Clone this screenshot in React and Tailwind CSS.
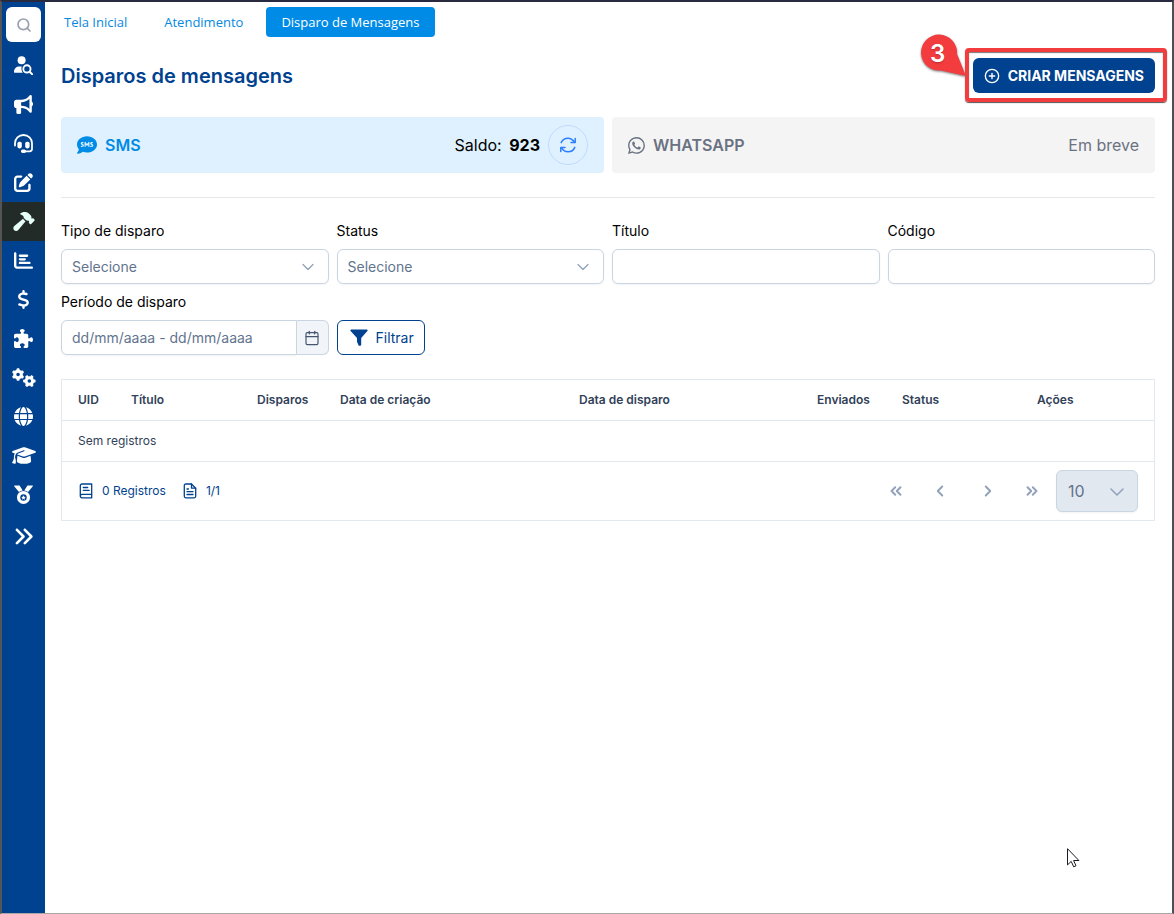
import { useState } from "react";
import { BsWhatsapp } from "react-icons/bs";
import {
  FaAnglesRight,
  FaBullhorn,
  FaChartBar,
  FaCommentSms,
  FaDollarSign,
  FaGears,
  FaGlobe,
  FaGraduationCap,
  FaHammer,
  FaPenToSquare,
  FaPuzzlePiece,
} from "react-icons/fa6";
import {
  Calendar,
  ChevronDown,
  ChevronLeft,
  ChevronRight,
  ChevronsLeft,
  ChevronsRight,
  CirclePlus,
  Search,
} from "lucide-react";

function UserSearchIcon({ className }) {
  return (
    <svg viewBox="0 0 20 20" className={className} fill="none">
      <circle cx="8" cy="4.4" r="4.2" fill="currentColor" />
      <path d="M0 17c0-4 2.400-6 5.800-6h2.400c-.8 2.200-.4 4.400 1 6.500H.5z" fill="currentColor" />
      <circle cx="13.600" cy="13.600" r="3.800" stroke="currentColor" strokeWidth="2" />
      <path d="M16.500 16.600l2.600 2.600" stroke="currentColor" strokeWidth="2" strokeLinecap="round" />
    </svg>
  );
}

function HeadsetIcon({ className }) {
  return (
    <svg viewBox="0 0 19 19" className={className} fill="none">
      <path
        d="M1 11.500V9.200a8.500 8.200 0 0 1 17 0v5.600c0 1.500-1 2.500-2.500 2.500H10"
        stroke="currentColor"
        strokeWidth="1.800"
        strokeLinecap="round"
      />
      <rect x="3.400" y="7.800" width="4.400" height="6.600" rx="1.800" fill="currentColor" />
      <rect x="11.200" y="7.800" width="4.400" height="6.600" rx="1.800" fill="currentColor" />
      <rect x="7" y="15.500" width="5" height="3.400" rx="1.600" fill="currentColor" />
    </svg>
  );
}

function MedalIcon({ className }) {
  return (
    <svg viewBox="0 0 20 20" className={className} fill="currentColor">
      <path d="M.5.500h5.300l3.400 5.200c-1.500.2-2.900.8-4 1.700L.2 1.300C0 .9.100.500.500.500z" />
      <path d="M19.500.500h-5.300l-3.400 5.200c1.500.2 2.900.8 4 1.700l5-6.100c.2-.4.100-.8-.3-.8z" />
      <path
        fillRule="evenodd"
        d="M10 6.200a6.900 6.900 0 1 0 0 13.800 6.900 6.900 0 0 0 0-13.800zm0 3.600a3.400 3.400 0 1 1 0 6.800 3.400 3.400 0 0 1 0-6.800z"
      />
      <path d="M10 10.800l.7 1.500 1.700.2-1.200 1.200.3 1.700-1.500-.8-1.500.8.3-1.700-1.200-1.200 1.700-.2z" />
    </svg>
  );
}

function SyncIcon({ className }) {
  return (
    <svg
      viewBox="0 0 16 16"
      className={className}
      fill="none"
      stroke="currentColor"
      strokeWidth="1.500"
      strokeLinecap="round"
      strokeLinejoin="round"
    >
      <path d="M1.200 5.600C2.400 2.800 4.900 1.200 8 1.200c2.900 0 5 1.600 6.600 4.200" />
      <path d="M15.200 1.400v4.200H11" />
      <path d="M14.800 10.400c-1.200 2.800-3.700 4.400-6.800 4.400-2.900 0-5-1.600-6.600-4.200" />
      <path d="M.8 14.600v-4.200H5" />
    </svg>
  );
}

function FilterIcon({ className }) {
  return (
    <svg viewBox="0 0 18 17" className={className} fill="currentColor">
      <path d="M1.200.500h15.600c.8 0 1.100.8.6 1.400L11.200 9v6.800c0 .5-.4.9-.9.900H9.200c-.5 0-.9-.4-.9-.9l-1.300-3V9L.6 1.900C.100 1.300.400.500 1.200.500z" />
    </svg>
  );
}

function RecordsIcon({ className }) {
  return (
    <svg viewBox="0 0 14 16" className={className} fill="none" stroke="currentColor" strokeWidth="1.300" strokeLinecap="round">
      <path d="M3 1h9.700v13.800H3c-1 0-1.700-.7-1.700-1.700V2.700C1.300 1.700 2 1 3 1z" strokeLinejoin="round" />
      <path d="M1.500 12c.4-.5.900-.7 1.500-.7h9.500M4.300 4.500h4.400M4.300 7.300h5.900" />
    </svg>
  );
}

function PageIcon({ className }) {
  return (
    <svg viewBox="0 0 14 16" className={className} fill="none" stroke="currentColor" strokeWidth="1.300" strokeLinecap="round" strokeLinejoin="round">
      <path d="M8.500 1H2.800C1.900 1 1.300 1.600 1.300 2.500v10.800c0 .9.600 1.500 1.500 1.500h8.400c.9 0 1.500-.6 1.500-1.500V5.200z" />
      <path d="M8.500 1v4.200h4.200M4 6h1.500M4 8.700h6M4 11.500h6" />
    </svg>
  );
}

const menu = [
  { label: "Clientes", icon: UserSearchIcon },
  { label: "Marketing", icon: FaBullhorn },
  { label: "Atendimento", icon: HeadsetIcon },
  { label: "Cadastros", icon: FaPenToSquare },
  { label: "Ferramentas", icon: FaHammer, active: true, wide: true },
  { label: "Relatórios", icon: FaChartBar },
  { label: "Financeiro", icon: FaDollarSign },
  { label: "Integrações", icon: FaPuzzlePiece },
  { label: "Configurações", icon: FaGears, wide: true },
  { label: "Site", icon: FaGlobe },
  { label: "Treinamentos", icon: FaGraduationCap, wide: true },
  { label: "Conquistas", icon: MedalIcon },
];

const columns = [
  { label: "UID", width: "w-[53px]" },
  { label: "Título", width: "w-[126px]" },
  { label: "Disparos", width: "w-[83px]" },
  { label: "Data de criação", width: "w-[239px]" },
  { label: "Data de disparo", width: "w-[238px]" },
  { label: "Enviados", width: "w-[85px]" },
  { label: "Status", width: "w-[135px]" },
  { label: "Ações", width: "w-[133px]" },
];

const fieldStyle =
  "h-[35px] w-full rounded-md border border-slate-300 bg-white px-2.5 text-sm text-slate-500 shadow-xs outline-none placeholder:text-slate-500";

function Field({ id, label, children }) {
  return (
    <div className="flex flex-col gap-2">
      <label htmlFor={id} className="text-sm leading-5 text-black">
        {label}
      </label>
      {children}
    </div>
  );
}

function SelectField({ id, label }) {
  return (
    <Field id={id} label={label}>
      <div className="relative">
        <select id={id} className={`${fieldStyle} appearance-none`}>
          <option>Selecione</option>
        </select>
        <ChevronDown
          strokeWidth={1.5}
          className="pointer-events-none absolute top-2 right-[11px] size-5 text-slate-400"
        />
      </div>
    </Field>
  );
}

function PageButton({ label, icon: Icon }) {
  return (
    <button type="button" aria-label={label} className="flex size-10 items-center justify-center text-slate-400">
      <Icon strokeWidth={2.5} className="size-[18px]" />
    </button>
  );
}

function Sidebar() {
  return (
    <aside className="flex w-[43px] shrink-0 flex-col bg-[#00428f]">
      <button
        type="button"
        aria-label="Buscar"
        className="mx-1 mt-[5px] mb-[3px] flex h-[35px] items-center justify-center rounded-md bg-white text-gray-400"
      >
        <Search strokeWidth={2.5} className="size-4" />
      </button>
      <nav className="flex flex-col pb-px">
        {menu.map(({ label, icon: Icon, active, wide }) => (
          <a
            key={label}
            href="#"
            aria-label={label}
            className={`flex h-[39px] items-center justify-center ${
              active ? "bg-[#222b28] text-[#e6fff8]" : "text-white"
            } first:h-10`}
          >
            <Icon className={wide ? "h-[19px] w-6" : "size-[19px]"} />
          </a>
        ))}
      </nav>
      <button type="button" aria-label="Expandir menu" className="mt-0.5 flex h-[39px] items-center justify-center text-white">
        <FaAnglesRight className="size-[21px]" />
      </button>
    </aside>
  );
}

function Tabs() {
  return (
    <nav className="flex h-[30px] items-stretch font-['Open_Sans',sans-serif] text-[13px] text-[#0688e0]">
      <a href="#" className="flex items-center pt-px pr-[18px] pl-[3px]">
        Tela Inicial
      </a>
      <a href="#" className="flex items-center px-[19px] pt-px">
        Atendimento
      </a>
      <a href="#" className="ml-1 flex items-center rounded-sm bg-[#008be6] px-[15px] pt-px text-white">
        Disparo de Mensagens
      </a>
    </nav>
  );
}

// Marcador do passo 3 do tutorial
function StepMarker() {
  return (
    <div className="pointer-events-none absolute -top-[10px] -right-[12px] -bottom-[9px] -left-[8px] rounded-sm border-4 border-[#f23c3e] shadow-[0_1px_1px_#555,inset_0_1px_1px_#777]">
      <div className="absolute -top-[18px] -left-[49px] h-[46px] w-[48px]">
        <svg viewBox="0 0 48 46" className="size-full drop-shadow-[0_1px_1px_#777]">
          <path d="M46 42L21 36.500A18 18 0 1 1 37 20z" fill="#f23c3e" />
        </svg>
        <span className="absolute top-1.5 left-0 w-9 text-center text-2xl leading-7 font-semibold text-white text-shadow-sm">
          3
        </span>
      </div>
    </div>
  );
}

export default function App() {
  const [title, setTitle] = useState("");
  const [code, setCode] = useState("");
  const [period, setPeriod] = useState("");

  return (
    <div className="relative flex min-h-screen border-2 border-t-[#29293f] border-r-[#4b5057] border-b-[#aaa6a6] border-l-[#555] border-b-1 bg-white font-[Inter,sans-serif]">
      <Sidebar />

      <main className="min-w-0 flex-1 pt-[5px] pr-[17px] pl-4">
        <Tabs />

        {/* Título e botão de criação */}
        <header className="mt-[21px] flex h-[35px] items-center justify-between">
          <h1 className="text-xl font-semibold text-[#00428f]">Disparos de mensagens</h1>
          <div className="relative">
            <button
              type="button"
              className="flex h-[35px] items-center gap-2 rounded-md bg-[#00428f] px-[11px] text-sm font-bold text-white"
            >
              <CirclePlus strokeWidth={2} className="size-4" />
              CRIAR MENSAGENS
            </button>
            <StepMarker />
          </div>
        </header>

        {/* Canais */}
        <section className="mt-6 grid grid-cols-2 gap-2">
          <div className="flex h-14 items-center rounded-sm bg-[#dff1fe] px-4">
            <FaCommentSms className="mr-2 size-5 text-[#008be6]" />
            <strong className="font-semibold text-[#008be6]">SMS</strong>
            <span className="ml-auto text-black">
              Saldo: <strong className="ml-[3px] font-bold">923</strong>
            </span>
            <button
              type="button"
              aria-label="Atualizar saldo"
              className="ml-2 flex size-10 items-center justify-center rounded-full border border-blue-200 text-blue-500"
            >
              <SyncIcon className="size-4" />
            </button>
          </div>
          <div className="flex h-14 items-center rounded-sm bg-[#f4f4f4] px-4 text-gray-500">
            <BsWhatsapp className="mr-2 size-[17px]" />
            <strong className="font-semibold">WHATSAPP</strong>
            <span className="ml-auto">Em breve</span>
          </div>
        </section>

        <hr className="mt-6 border-gray-200" />

        {/* Filtros */}
        <form className="mt-[23px] grid grid-cols-4 gap-2" onSubmit={(e) => e.preventDefault()}>
          <SelectField id="tipo" label="Tipo de disparo" />
          <SelectField id="status" label="Status" />
          <Field id="titulo" label="Título">
            <input id="titulo" value={title} onChange={(e) => setTitle(e.target.value)} className={fieldStyle} />
          </Field>
          <Field id="codigo" label="Código">
            <input id="codigo" value={code} onChange={(e) => setCode(e.target.value)} className={fieldStyle} />
          </Field>
          <Field id="periodo" label="Período de disparo">
            <div className="flex">
              <input
                id="periodo"
                value={period}
                onChange={(e) => setPeriod(e.target.value)}
                placeholder="dd/mm/aaaa - dd/mm/aaaa"
                className={`${fieldStyle} rounded-r-none`}
              />
              <button
                type="button"
                aria-label="Abrir calendário"
                className="flex w-8 shrink-0 items-center justify-center rounded-r-md border border-l-0 border-slate-300 bg-slate-100 text-slate-600"
              >
                <Calendar strokeWidth={1.75} className="size-4" />
              </button>
            </div>
          </Field>
          <button
            type="submit"
            className="flex h-[35px] items-center gap-2 self-end justify-self-start rounded-md border border-[#00428f] px-2.5 pl-3 text-sm text-[#00428f]"
          >
            <FilterIcon className="h-[17px] w-[18px]" />
            Filtrar
          </button>
        </form>

        {/* Tabela */}
        <section className="mt-6 border border-slate-200 text-xs text-slate-700">
          <table className="w-full table-fixed text-left">
            <thead>
              <tr className="h-10 border-b border-slate-200">
                {columns.map((col) => (
                  <th key={col.label} className={`${col.width} pl-4 font-semibold whitespace-nowrap`}>
                    {col.label}
                  </th>
                ))}
              </tr>
            </thead>
            <tbody>
              <tr className="h-[41px] border-b border-slate-200">
                <td colSpan={8} className="px-4">
                  Sem registros
                </td>
              </tr>
            </tbody>
          </table>

          <footer className="flex items-center justify-between px-4 py-2">
            <div className="flex items-center text-[#00428f]">
              <RecordsIcon className="mr-2 h-4 w-4" />
              0 Registros
              <PageIcon className="mr-2 ml-4 h-4 w-4" />
              1/1
            </div>
            <div className="flex items-center gap-1">
              <PageButton label="Primeira página" icon={ChevronsLeft} />
              <PageButton label="Página anterior" icon={ChevronLeft} />
              <span className="w-0" />
              <PageButton label="Próxima página" icon={ChevronRight} />
              <PageButton label="Última página" icon={ChevronsRight} />
              <div className="relative">
                <select
                  aria-label="Registros por página"
                  className="h-[42px] w-[82px] appearance-none rounded-md border border-slate-300 bg-slate-200 px-[11px] text-base text-slate-500 shadow-xs"
                >
                  <option>10</option>
                </select>
                <ChevronDown
                  strokeWidth={1.5}
                  className="pointer-events-none absolute top-[10px] right-[9px] size-6 text-slate-400"
                />
              </div>
            </div>
          </footer>
        </section>
      </main>

      {/* Ponteiro do mouse */}
      <svg viewBox="0 0 13 20" className="absolute top-[846px] left-[1065px] h-5 w-[13px]">
        <path
          d="M.5.700v16.200l3.700-3.500 2.500 5.400 2.300-1-2.400-5.300h5.300z"
          fill="#fff"
          stroke="#1a1a24"
        />
      </svg>
    </div>
  );
}
